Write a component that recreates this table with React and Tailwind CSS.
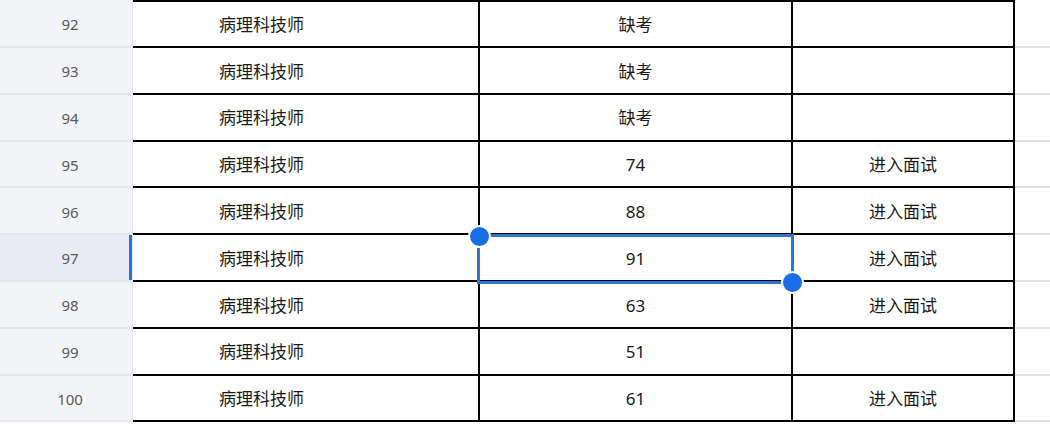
import React from "react";

const rows = [
  { n: 92, a: "病理科技师", b: "缺考", c: "" },
  { n: 93, a: "病理科技师", b: "缺考", c: "" },
  { n: 94, a: "病理科技师", b: "缺考", c: "" },
  { n: 95, a: "病理科技师", b: "74", c: "进入面试" },
  { n: 96, a: "病理科技师", b: "88", c: "进入面试" },
  { n: 97, a: "病理科技师", b: "91", c: "进入面试" },
  { n: 98, a: "病理科技师", b: "63", c: "进入面试" },
  { n: 99, a: "病理科技师", b: "51", c: "" },
  { n: 100, a: "病理科技师", b: "61", c: "进入面试" },
];

function App() {
  return (
    <div
      className="relative w-[1050px] h-[424px] overflow-hidden bg-white"
      style={{ fontFamily: '"Noto Sans", "Noto Sans CJK SC", sans-serif' }}
    >
      {rows.map((r, i) => {
        const first = i === 0;
        const active = r.n === 97;
        return (
          <div key={r.n} className={`flex ${first ? "h-[48px]" : "h-[46.8px]"}`}>
            <div
              className={`relative w-[133px] shrink-0 flex items-center justify-center pt-[2px] border-b-2 border-r border-[#e4e6eb] text-[15px] text-[#5a5a5a] ${
                active ? "bg-[#e8ebf3]" : "bg-[#f3f4f8]"
              }`}
            >
              <span className="pl-2">{r.n}</span>
              {active && (
                <div className="absolute right-0 top-0 bottom-0 w-[3px] bg-[#2d6fd2]" />
              )}
            </div>
            <div
              className={`w-[345px] shrink-0 flex items-center pt-[2px] pl-[86px] border-b-2 border-black text-[17px] text-[#1a1a1a] ${
                first ? "border-t-2" : ""
              }`}
            >
              {r.a}
            </div>
            <div
              className={`w-[313px] shrink-0 flex items-center justify-center pt-[2px] border-l-2 border-b-2 border-black text-[17px] text-[#1a1a1a] ${
                first ? "border-t-2" : ""
              }`}
            >
              {r.b}
            </div>
            <div
              className={`w-[224px] shrink-0 flex items-center justify-center pt-[2px] border-l-2 border-r-2 border-b-2 border-black text-[17px] text-[#1a1a1a] ${
                first ? "border-t-2" : ""
              }`}
            >
              {r.c}
            </div>
            <div className="flex-1 border-b-2 border-[#e2e2e4]" />
          </div>
        );
      })}

      {/* selection box */}
      <div className="absolute left-[477px] top-[234px] w-[317px] h-[50px] border-[3px] border-[#2f74d0]" />
      <div className="absolute left-[468px] top-[225px] w-[23px] h-[23px] rounded-full bg-[#1a6ee6] border-2 border-white" />
      <div className="absolute left-[781px] top-[271px] w-[23px] h-[23px] rounded-full bg-[#1a6ee6] border-2 border-white" />
    </div>
  );
}

export default App;
